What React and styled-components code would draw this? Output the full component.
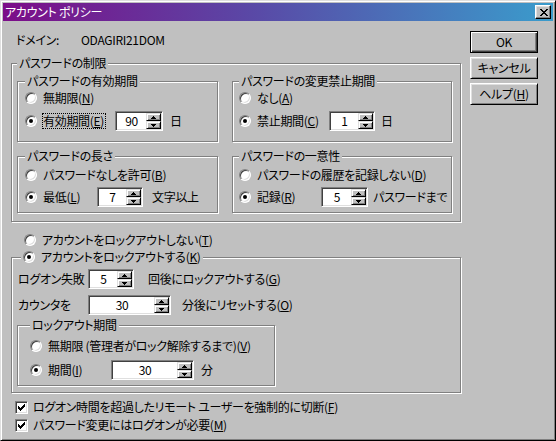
import React from 'react'
import styled, { createGlobalStyle } from 'styled-components'

const GlobalStyle = createGlobalStyle`
  body {
    margin: 0;
    background: #c0c0c0;
  }
`

// pixel-art helper: [x, y, w] runs -> path
const px = runs => runs.map(([x, y, w]) => `M${x} ${y}h${w}v1h-${w}z`).join('')

const closeX = px([
  [0, 0, 2], [6, 0, 2], [1, 1, 2], [5, 1, 2], [2, 2, 4], [3, 3, 2],
  [2, 4, 4], [1, 5, 2], [5, 5, 2], [0, 6, 2], [6, 6, 2],
])
const checkMark = px([
  [6, 0, 1], [5, 1, 2], [0, 2, 1], [4, 2, 3], [0, 3, 2], [3, 3, 3],
  [0, 4, 5], [1, 5, 3], [2, 6, 1],
])
const upArrow = px([[2, 0, 1], [1, 1, 3], [0, 2, 5]])
const downArrow = px([[0, 0, 5], [1, 1, 3], [2, 2, 1]])

const RadioChoice = ({ checked, w, focus, children }) => (
  <Choice $w={w}>
    <RadioMark $checked={checked} />
    {focus ? <Focus>{children}</Focus> : <span>{children}</span>}
  </Choice>
)

const Spin = ({ value, w }) => (
  <SpinFrame $w={w}>
    <SpinText>{value}</SpinText>
    <SpinButtons>
      <SpinButton>
        <svg width="5" height="3" viewBox="0 0 5 3" shapeRendering="crispEdges"><path d={upArrow} fill="#000" /></svg>
      </SpinButton>
      <SpinButton>
        <svg width="5" height="3" viewBox="0 0 5 3" shapeRendering="crispEdges"><path d={downArrow} fill="#000" /></svg>
      </SpinButton>
    </SpinButtons>
  </SpinFrame>
)

const CheckChoice = ({ children }) => (
  <CheckLabel>
    <CheckBox>
      <svg width="7" height="7" viewBox="0 0 7 7" shapeRendering="crispEdges"><path d={checkMark} fill="#000" /></svg>
    </CheckBox>
    <span>{children}</span>
  </CheckLabel>
)

const App = () => {
  return (
    <>
      <GlobalStyle />
      <Window>
        <TitleBar>
          <Title>アカウント ポリシー</Title>
          <CloseButton>
            <svg width="8" height="7" viewBox="0 0 8 7" shapeRendering="crispEdges"><path d={closeX} fill="#000" /></svg>
          </CloseButton>
        </TitleBar>
        <Body>
          <Main>
            <DomainRow>
              <DomainLabel>ドメイン:</DomainLabel>
              <span>ODAGIRI21DOM</span>
            </DomainRow>

            <Group $w={450} $h={166} $mt={9} $pad="4px 8px 8px 5px">
              <Legend>パスワードの制限</Legend>
              <GroupGrid>
                <Group $w={201} $h={68} $pad="3px 0 0 7px">
                  <Legend>パスワードの有効期間</Legend>
                  <Row>
                    <RadioChoice>無期限(<u>N</u>)</RadioChoice>
                  </Row>
                  <Row $h={20} $mt={6}>
                    <RadioChoice checked focus w={90}>有効期間(<u>E</u>)</RadioChoice>
                    <Spin value="90" w={48} />
                    <Unit $ml={7}>日</Unit>
                  </Row>
                </Group>
                <Group $w={220} $h={68} $pad="3px 0 0 6px">
                  <Legend>パスワードの変更禁止期間</Legend>
                  <Row>
                    <RadioChoice>なし(<u>A</u>)</RadioChoice>
                  </Row>
                  <Row $h={20} $mt={6}>
                    <RadioChoice checked w={90}>禁止期間(<u>C</u>)</RadioChoice>
                    <Spin value="1" w={46} />
                    <Unit $ml={6}>日</Unit>
                  </Row>
                </Group>
                <Group $w={201} $h={64} $pad="5px 0 0 7px">
                  <Legend>パスワードの長さ</Legend>
                  <Row>
                    <RadioChoice>パスワードなしを許可(<u>B</u>)</RadioChoice>
                  </Row>
                  <Row $h={20} $mt={5}>
                    <RadioChoice checked w={72}>最低(<u>L</u>)</RadioChoice>
                    <Spin value="7" w={46} />
                    <Unit $ml={9}>文字以上</Unit>
                  </Row>
                </Group>
                <Group $w={220} $h={64} $pad="5px 0 0 6px">
                  <Legend>パスワードの一意性</Legend>
                  <Row>
                    <RadioChoice>パスワードの履歴を記録しない(<u>D</u>)</RadioChoice>
                  </Row>
                  <Row $h={20} $mt={5}>
                    <RadioChoice checked w={82}>記録(<u>R</u>)</RadioChoice>
                    <Spin value="5" w={47} />
                    <Unit $ml={5}>パスワードまで</Unit>
                  </Row>
                </Group>
              </GroupGrid>
            </Group>

            <Row $mt={11} $pl={13}>
              <RadioChoice>アカウントをロックアウトしない(<u>T</u>)</RadioChoice>
            </Row>

            <Group $w={450} $h={143} $mt={3} $pad="0 0 6px 6px">
              <Legend $ml={3}>
                <RadioChoice checked>アカウントをロックアウトする(<u>K</u>)</RadioChoice>
              </Legend>
              <Row $h={20} $mt={5}>
                <FieldLabel>ログオン失敗</FieldLabel>
                <Spin value="5" w={46} />
                <Unit $ml={14}>回後にロックアウトする(<u>G</u>)</Unit>
              </Row>
              <Row $h={20} $mt={6}>
                <FieldLabel>カウンタを</FieldLabel>
                <Spin value="30" w={83} />
                <Unit $ml={11}>分後にリセットする(<u>O</u>)</Unit>
              </Row>
              <Group $w={258} $h={68} $mt={3} $ml={-1} $pad="7px 0 0 12px">
                <Legend>ロックアウト期間</Legend>
                <Row>
                  <RadioChoice>無期限 (管理者がロック解除するまで)(<u>V</u>)</RadioChoice>
                </Row>
                <Row $h={20} $mt={7}>
                  <RadioChoice checked w={81}>期間(<u>I</u>)</RadioChoice>
                  <Spin value="30" w={83} />
                  <Unit $ml={7}>分</Unit>
                </Row>
              </Group>
            </Group>

            <Row $mt={7} $pl={4}>
              <CheckChoice>ログオン時間を超過したリモート ユーザーを強制的に切断(<u>F</u>)</CheckChoice>
            </Row>
            <Row $mt={4} $pl={4}>
              <CheckChoice>パスワード変更にはログオンが必要(<u>M</u>)</CheckChoice>
            </Row>
          </Main>

          <Buttons>
            <Button $default>OK</Button>
            <Button>キャンセル</Button>
            <Button><span>ヘルプ(<u>H</u>)</span></Button>
          </Buttons>
        </Body>
      </Window>
    </>
  )
}

const Window = styled.div`
  width: 556px;
  height: 441px;
  box-sizing: border-box;
  background: #c0c0c0;
  border: 1px solid;
  border-color: #dfdfdf #000 #000 #dfdfdf;
  box-shadow: inset 1px 1px 0 #fff, inset -1px -1px 0 #808080;
  padding: 2px;
  display: flex;
  flex-direction: column;
  font-family: "Noto Sans CJK JP", "Noto Sans", sans-serif;
  font-feature-settings: "palt";
  font-size: 12px;
  letter-spacing: -0.3px;
  line-height: 14px;
  color: #000;
  u { text-underline-offset: 1px; }
`

const TitleBar = styled.div`
  height: 18px;
  flex-shrink: 0;
  display: flex;
  align-items: center;
  justify-content: space-between;
  padding: 0 2px;
  background: linear-gradient(to right, #7c0d88, #5a48a6 45%, #3a9ccc);
`

const Title = styled.span`
  color: #fff;
  font-size: 12px;
`

const CloseButton = styled.div`
  width: 16px;
  height: 14px;
  box-sizing: border-box;
  background: #c0c0c0;
  border: 1px solid;
  border-color: #fff #000 #000 #fff;
  box-shadow: inset -1px -1px 0 #808080, inset 1px 1px 0 #dfdfdf;
  display: flex;
  align-items: center;
  justify-content: center;
  svg { margin: 0 0 0 1px; }
`

const Body = styled.div`
  display: flex;
  flex: 1;
`

const Main = styled.div`
  width: 467px;
  box-sizing: border-box;
  padding: 12px 0 0 8px;
  display: flex;
  flex-direction: column;
`

const DomainRow = styled.div`
  display: flex;
  align-items: center;
  height: 14px;
  padding-left: 5px;
`

const DomainLabel = styled.span`
  width: 65px;
`

const Group = styled.fieldset`
  box-sizing: border-box;
  width: ${p => p.$w}px;
  height: ${p => p.$h}px;
  margin: ${p => p.$mt || 0}px 0 0 ${p => p.$ml || 0}px;
  padding: ${p => p.$pad || 0};
  min-inline-size: 0;
  border: 1px solid #808080;
  box-shadow: inset 1px 1px 0 #fff, 1px 1px 0 #fff;
`

const Legend = styled.legend`
  padding: 0 2px;
  margin-left: ${p => p.$ml || 0}px;
  height: 14px;
  line-height: 14px;
  background: #c0c0c0;
  display: flex;
  align-items: center;
  white-space: nowrap;
`

const GroupGrid = styled.div`
  display: grid;
  grid-template-columns: 201px 220px;
  column-gap: 14px;
  row-gap: 7px;
  align-items: start;
`

const Row = styled.div`
  display: flex;
  align-items: center;
  height: ${p => p.$h || 14}px;
  margin-top: ${p => p.$mt || 0}px;
  padding-left: ${p => p.$pl || 0}px;
  white-space: nowrap;
`

const Choice = styled.label`
  display: flex;
  align-items: center;
  gap: 6px;
  width: ${p => (p.$w ? `${p.$w}px` : 'auto')};
  flex-shrink: 0;
  white-space: nowrap;
`

const CheckLabel = styled.label`
  display: flex;
  align-items: center;
  gap: 5px;
  white-space: nowrap;
`

const RadioMark = styled.span`
  width: 12px;
  height: 12px;
  box-sizing: border-box;
  flex-shrink: 0;
  border-radius: 50%;
  background: #fff;
  border: 1px solid;
  border-color: #808080 #fff #fff #808080;
  box-shadow: inset 1px 1px 0 #404040, inset -1px -1px 0 #dfdfdf;
  display: flex;
  align-items: center;
  justify-content: center;
  &::after {
    content: '';
    display: ${p => (p.$checked ? 'block' : 'none')};
    width: 4px;
    height: 4px;
    border-radius: 50%;
    background: #000;
  }
`

const Focus = styled.span`
  outline: 1px dotted #000;
  outline-offset: 0;
  padding: 0 1px 0 0;
`

const CheckBox = styled.span`
  width: 13px;
  height: 13px;
  box-sizing: border-box;
  flex-shrink: 0;
  background: #fff;
  border: 1px solid;
  border-color: #808080 #fff #fff #808080;
  box-shadow: inset 1px 1px 0 #404040, inset -1px -1px 0 #dfdfdf;
  display: flex;
  align-items: center;
  justify-content: center;
`

const FieldLabel = styled.span`
  width: 70px;
  flex-shrink: 0;
`

const SpinFrame = styled.div`
  width: ${p => p.$w}px;
  height: 20px;
  box-sizing: border-box;
  flex-shrink: 0;
  display: flex;
  background: #fff;
  border: 1px solid;
  border-color: #808080 #fff #fff #808080;
  box-shadow: inset 1px 1px 0 #404040, inset -1px -1px 0 #dfdfdf;
  padding: 1px;
`

const SpinText = styled.div`
  flex: 1;
  display: flex;
  align-items: center;
  justify-content: center;
`

const SpinButtons = styled.div`
  width: 15px;
  display: flex;
  flex-direction: column;
`

const SpinButton = styled.div`
  flex: 1;
  box-sizing: border-box;
  background: #c0c0c0;
  border: 1px solid;
  border-color: #dfdfdf #000 #000 #dfdfdf;
  box-shadow: inset 1px 1px 0 #fff, inset -1px -1px 0 #808080;
  display: flex;
  align-items: center;
  justify-content: center;
`

const Unit = styled.span`
  margin-left: ${p => p.$ml || 0}px;
`

const Buttons = styled.div`
  display: flex;
  flex-direction: column;
  gap: 4px;
  padding-top: 10px;
`

const Button = styled.div`
  width: 68px;
  height: 22px;
  box-sizing: border-box;
  background: #c0c0c0;
  display: flex;
  align-items: center;
  justify-content: center;
  border: 1px solid;
  border-color: ${p => (p.$default ? '#000' : '#fff #000 #000 #fff')};
  box-shadow: ${p => (p.$default
    ? 'inset 1px 1px 0 #fff, inset -1px -1px 0 #404040, inset -2px -2px 0 #808080'
    : 'inset 1px 1px 0 #dfdfdf, inset -1px -1px 0 #808080')};
`

export default App
